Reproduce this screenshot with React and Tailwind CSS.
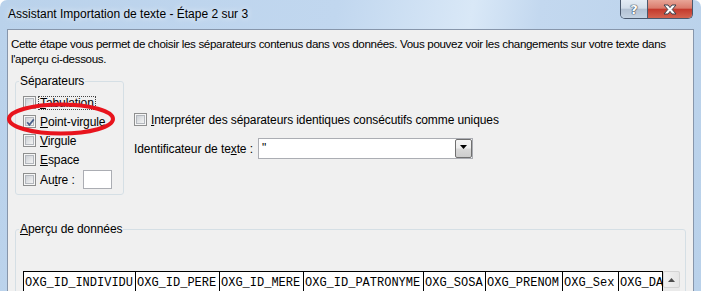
import React from 'react';

function CheckBox({ checked }) {
    return (
        <span className="relative flex h-[13px] w-[13px] shrink-0 items-center justify-center border border-[#8e8f8f] bg-[#f6f6f6]">
            <span className="h-[9px] w-[9px] border border-[#b3b7bd] bg-[linear-gradient(135deg,#cdd1d6,#f4f4f4)]" />
            {checked && (
                <svg className="absolute left-[1px] top-[1px]" width="11" height="11" viewBox="0 0 11 11">
                    <path d="M2.2 5.2 L4.4 7.8 L8.8 2.4" fill="none" stroke="#4a5f8a" strokeWidth="1.7" />
                </svg>
            )}
        </span>
    );
}

function Option({ children, checked, focus, extra }) {
    return (
        <div className="flex h-[19px] items-center">
            <CheckBox checked={checked} />
            {focus ? (
                <span className="ml-[2px] border border-dotted border-[#444] px-[1px] leading-[12px]">{children}</span>
            ) : (
                <span className="ml-[4px] leading-[14px]">{children}</span>
            )}
            {extra}
        </div>
    );
}

const columns = [
    { label: 'OXG_ID_INDIVIDU', w: 'w-[112px]' },
    { label: 'OXG_ID_PERE', w: 'w-[84px]' },
    { label: 'OXG_ID_MERE', w: 'w-[84px]' },
    { label: 'OXG_ID_PATRONYME', w: 'w-[120px]' },
    { label: 'OXG_SOSA', w: 'w-[62px]' },
    { label: 'OXG_PRENOM', w: 'w-[77px]' },
    { label: 'OXG_Sex', w: 'w-[56px]' },
    { label: 'OXG_DATE_NAISSANCE', w: 'w-[160px]' },
];

export default function App() {
    return (
        <div className="flex h-[291px] w-[701px] flex-col overflow-hidden rounded-t-[7px] bg-[linear-gradient(100deg,#bad2eb_0%,#c1d7ef_45%,#d9e8f7_63%,#c3d8ef_72%,#b9d1ea_100%)] font-['Liberation_Sans',Arial,sans-serif] text-[12px] tracking-[-0.1px] text-black">
            {/* title bar */}
            <div className="flex h-[29px] shrink-0 items-start justify-between">
                <div className="pl-[8px] pt-[7px] leading-[14px] tracking-normal [text-shadow:0_0_6px_#ffffff]">Assistant Importation de texte - Étape 2 sur 3</div>
                <div className="mr-[8px] flex h-[19px] overflow-hidden rounded-b-[5px] border border-t-0 border-[#4a596e]">
                    <div className="flex w-[27px] items-center justify-center border-r border-[#4a596e] bg-[linear-gradient(#e4ecf5,#d3deea_45%,#b2c1d3_52%,#c3d2e2)]">
                        <span className="font-['DejaVu_Sans',sans-serif] text-[13px] font-bold leading-none text-white [text-shadow:0_0_1px_#2c3a4c,0_0_1px_#2c3a4c,0_0_1px_#2c3a4c]">?</span>
                    </div>
                    <div className="flex w-[44px] items-center justify-center bg-[linear-gradient(#e8a597,#da7b6c_45%,#c43a2d_52%,#d4634f)]">
                        <svg width="14" height="11" viewBox="0 0 14 11">
                            <path d="M1 1 H5 L7 3.6 L9 1 H13 L9.2 5.5 L13 10 H9 L7 7.4 L5 10 H1 L4.8 5.5 Z" fill="#ffffff" stroke="#3a3f4a" strokeWidth="1" strokeLinejoin="round" />
                        </svg>
                    </div>
                </div>
            </div>

            {/* client area */}
            <div className="mx-[7px] flex-1 border border-b-0 border-[#8796ab] bg-[#f0f0f0] pl-[3px] pt-[6px]">
                <p className="whitespace-nowrap text-[11.6px] leading-[15px] tracking-[-0.35px]">
                    Cette étape vous permet de choisir les séparateurs contenus dans vos données. Vous pouvez voir les changements sur votre texte dans
                    <br />
                    l'aperçu ci-dessous.
                </p>

                <div className="relative mt-[9px] flex">
                    <fieldset className="ml-[4px] h-[120px] w-[109px] shrink-0 rounded-[3px] border border-[#d5dfe5]">
                        <legend className="ml-[3px] px-[1px] leading-[13px]">Séparateurs</legend>
                        <div className="pl-[7px] pt-[5px]">
                            <Option focus><u>T</u>abulation</Option>
                            <Option checked><u>P</u>oint-virgule</Option>
                            <Option><u>V</u>irgule</Option>
                            <Option><u>E</u>space</Option>
                            <div className="mt-[1px]">
                                <Option extra={<span className="ml-[8px] h-[19px] w-[29px] border border-[#abadb3] bg-white" />}>Au<u>t</u>re :</Option>
                            </div>
                        </div>
                    </fieldset>

                    <div className="ml-[10px] flex flex-col">
                        <div className="mt-[35px]">
                            <Option><u>I</u>nterpréter des séparateurs identiques consécutifs comme uniques</Option>
                        </div>
                        <div className="mt-[9px] flex h-[21px] items-center">
                            <span className="w-[124px] leading-[14px]">Identificateur de te<u>x</u>te :</span>
                            <div className="flex h-[21px] w-[215px] items-stretch border border-[#abadb3] bg-white">
                                <span className="flex-1 pl-[3px] pt-[1px] leading-[16px]">"</span>
                                <span className="flex w-[17px] items-center justify-center rounded-[2px] border border-[#707070] bg-[linear-gradient(#f4f4f4,#ececec_48%,#d9d9d9_52%,#cdcdcd)]">
                                    <svg width="7" height="4" viewBox="0 0 7 4" className="-mt-[3px]">
                                        <path d="M0 0 H7 L3.5 4 Z" fill="#000000" />
                                    </svg>
                                </span>
                            </div>
                        </div>
                    </div>

                    <svg className="pointer-events-none absolute left-[-6px] top-[25px]" width="112" height="38" viewBox="0 0 112 38">
                        <ellipse cx="56" cy="19" rx="52" ry="14.5" fill="none" stroke="#e8141d" strokeWidth="4" />
                    </svg>
                </div>

                <fieldset className="ml-[4px] mt-[28px] h-[90px] w-[671px] rounded-[3px] border border-[#d5dfe5]">
                    <legend className="ml-[3px] px-[1px] leading-[13px]"><u>A</u>perçu de données</legend>
                    <div className="flex pl-[7px] pt-[35px]">
                        <div className="flex w-[640px] overflow-hidden border-r border-black">
                            {columns.map((c) => (
                                <div key={c.label} className={`${c.w} h-[30px] shrink-0 whitespace-nowrap border-l border-t border-black bg-white pl-[1px] pt-[4px] font-['Liberation_Mono','Courier_New',monospace] text-[12px] leading-[14px] tracking-normal`}>
                                    {c.label}
                                </div>
                            ))}
                        </div>
                        <div className="flex w-[17px] flex-col bg-[#eaeaea]">
                            <div className="flex h-[17px] items-center justify-center rounded-[2px] border border-[#d4d4d4] bg-[linear-gradient(90deg,#f2f2f2,#e6e6e6)]">
                                <svg width="7" height="4" viewBox="0 0 7 4">
                                    <path d="M0 4 H7 L3.5 0 Z" fill="#4d4d4d" />
                                </svg>
                            </div>
                        </div>
                    </div>
                </fieldset>
            </div>
        </div>
    );
}
